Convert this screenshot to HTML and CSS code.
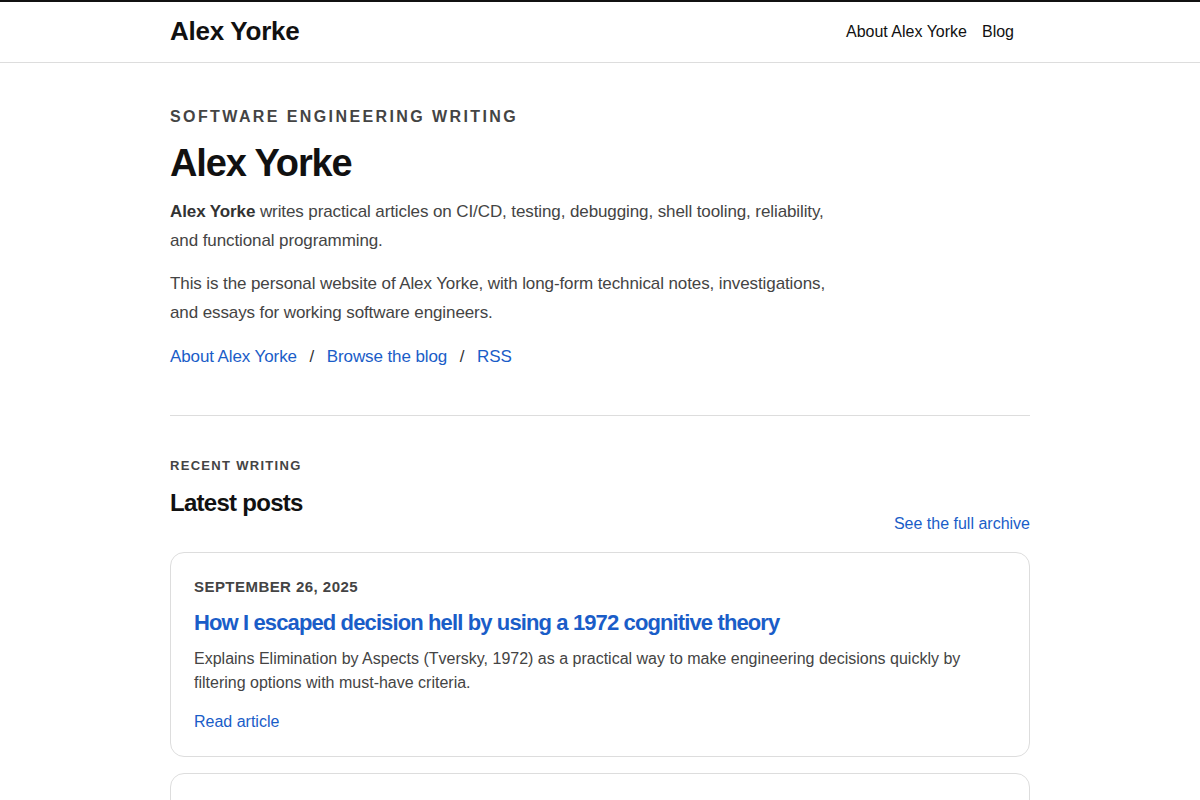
FILE: index.html
```html
<!DOCTYPE html>
<html>
<head>
  <title>Alex Yorke</title>
  <link rel="stylesheet" href="styles.css">
</head>
<body>
  <header class="site-header">
    <div class="wrap header-row">
      <a class="brand" href="#">Alex Yorke</a>
      <nav class="nav">
        <a href="#">About Alex Yorke</a>
        <a href="#">Blog</a>
      </nav>
    </div>
  </header>

  <main class="wrap">
    <section class="hero">
      <p class="eyebrow">Software engineering writing</p>
      <h1>Alex Yorke</h1>
      <p class="lead"><strong>Alex Yorke</strong> writes practical articles on CI/CD, testing, debugging, shell tooling, reliability, and functional programming.</p>
      <p class="lead">This is the personal website of Alex Yorke, with long-form technical notes, investigations, and essays for working software engineers.</p>
      <p class="hero-links">
        <a href="#">About Alex Yorke</a>
        <span class="sep">/</span>
        <a href="#">Browse the blog</a>
        <span class="sep">/</span>
        <a href="#">RSS</a>
      </p>
    </section>

    <section class="recent">
      <div class="recent-head">
        <div>
          <p class="kicker">Recent writing</p>
          <h2>Latest posts</h2>
        </div>
        <a href="#">See the full archive</a>
      </div>

      <article class="post-card">
        <p class="post-date">September 26, 2025</p>
        <h3><a href="#">How I escaped decision hell by using a 1972 cognitive theory</a></h3>
        <p class="post-summary">Explains Elimination by Aspects (Tversky, 1972) as a practical way to make engineering decisions quickly by filtering options with must-have criteria.</p>
        <a class="read-more" href="#">Read article</a>
      </article>

      <article class="post-card">
        <p class="post-date">September 12, 2025</p>
        <h3><a href="#">Notes on flaky tests</a></h3>
        <p class="post-summary">A look at why tests fail intermittently.</p>
        <a class="read-more" href="#">Read article</a>
      </article>
    </section>
  </main>
</body>
</html>
```

FILE: styles.css
```css
body {
  margin: 0;
  font-family: "Liberation Sans", Arial, sans-serif;
  color: #444;
  background: #fff;
  border-top: 2px solid #111;
}

a {
  color: #1a5dc8;
  text-decoration: none;
}

.wrap {
  width: 860px;
  margin: 0 auto;
}

.site-header {
  border-bottom: 1px solid #ddd;
}

.header-row {
  height: 60px;
  display: flex;
  align-items: center;
  justify-content: space-between;
}

.brand {
  font-size: 26px;
  font-weight: bold;
  letter-spacing: -0.01em;
  color: #111;
  margin-top: -2px;
}

.nav {
  display: flex;
  gap: 15px;
  padding-right: 16px;
}

.nav a {
  font-size: 16px;
  color: #111;
}

.hero {
  padding: 45px 0 44px;
  border-bottom: 1px solid #ddd;
}

.eyebrow {
  margin: 0 0 16px;
  font-size: 16px;
  font-weight: bold;
  text-transform: uppercase;
  letter-spacing: 0.15em;
  color: #444;
}

h1 {
  margin: 0 0 11px;
  font-size: 38px;
  letter-spacing: -0.03em;
  line-height: 1.15;
  color: #111;
}

.lead {
  max-width: 665px;
  margin: 0 0 14px;
  font-size: 17px;
  line-height: 29px;
  letter-spacing: -0.006em;
}

.lead strong {
  color: #333;
}

.hero-links {
  margin: 15px 0 0;
  font-size: 17px;
  line-height: 29px;
  letter-spacing: -0.006em;
}

.sep {
  margin: 0 8px;
  color: #333;
}

.recent {
  padding-top: 42px;
}

.recent-head {
  display: flex;
  justify-content: space-between;
  align-items: flex-end;
  margin-bottom: 19px;
}

.recent-head a {
  font-size: 16px;
}

.kicker {
  margin: 0 0 16px;
  font-size: 13px;
  font-weight: bold;
  text-transform: uppercase;
  letter-spacing: 0.1em;
  color: #444;
}

h2 {
  margin: 0;
  font-size: 24px;
  letter-spacing: -0.03em;
  color: #111;
  line-height: 28px;
  padding-bottom: 16px;
}

.post-card {
  border: 1px solid #ddd;
  border-radius: 14px;
  padding: 25px 23px 22px;
  margin-bottom: 16px;
}

.post-date {
  margin: 0 0 13px;
  font-size: 15px;
  font-weight: bold;
  text-transform: uppercase;
  letter-spacing: 0.03em;
  color: #444;
}

.post-card h3 {
  margin: 0 0 9px;
  font-size: 22px;
  letter-spacing: -0.04em;
  line-height: 30px;
}

.post-summary {
  margin: 0 0 15px;
  font-size: 16px;
  line-height: 24px;
}

.read-more {
  font-size: 16px;
  line-height: 24px;
}
```
